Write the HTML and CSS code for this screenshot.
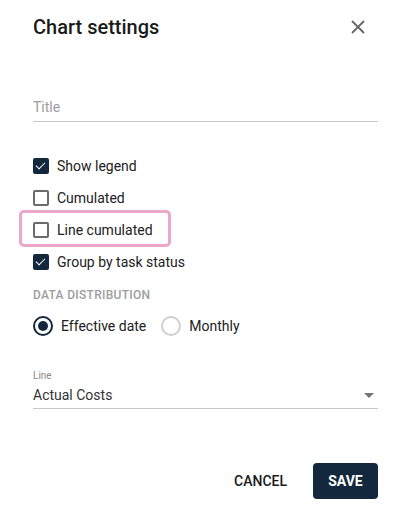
FILE: index.html
```html
<!DOCTYPE html>
<html lang="en">
<head>
    <meta charset="UTF-8">
    <meta name="viewport" content="width=device-width, initial-scale=1.0">
    <title>Chart settings</title>
    <link rel="stylesheet" href="styles.css">
</head>
<body>

<div class="dialog">
    <div class="dialog-header">
        <h2>Chart settings</h2>
        <button class="close-btn" aria-label="Close">
            <svg width="14" height="14" viewBox="0 0 14 14">
                <path d="M1 1 L13 13 M13 1 L1 13" stroke="#666" stroke-width="1.8" fill="none"/>
            </svg>
        </button>
    </div>

    <div class="field title-field">
        <span class="placeholder">Title</span>
    </div>

    <div class="checks">
        <label class="check-row"><span class="box checked"></span>Show legend</label>
        <label class="check-row"><span class="box"></span>Cumulated</label>
        <label class="check-row highlighted"><span class="box"></span>Line cumulated</label>
        <label class="check-row"><span class="box checked"></span>Group by task status</label>
    </div>

    <div class="section-label">Data distribution</div>

    <div class="radios">
        <label class="radio-row"><span class="radio selected"></span>Effective date</label>
        <label class="radio-row"><span class="radio"></span>Monthly</label>
    </div>

    <div class="select-field">
        <div class="select-label">Line</div>
        <div class="select-value">
            <span>Actual Costs</span>
            <span class="arrow"></span>
        </div>
    </div>

    <div class="dialog-actions">
        <button class="btn btn-text">Cancel</button>
        <button class="btn btn-primary">Save</button>
    </div>
</div>

</body>
</html>
```

FILE: styles.css
```css
body {
    font-family: Roboto, 'Liberation Sans', sans-serif;
    background-color: #fff;
    color: #212121;
    margin: 0;
    padding: 0;
}

.dialog {
    padding: 14px 18px 0 33px;
}

.dialog-header {
    display: flex;
    justify-content: space-between;
    align-items: center;
    height: 26px;
}

.dialog-header h2 {
    margin: 0;
    font-size: 20px;
    font-weight: 500;
    line-height: 26px;
    color: #1a1a1a;
}

.close-btn {
    background: none;
    border: none;
    padding: 0;
    margin-right: 13px;
    width: 14px;
    height: 14px;
    display: flex;
    cursor: pointer;
}

.field {
    margin-top: 57px;
    padding-bottom: 4px;
    border-bottom: 1px solid #c8c8c8;
}

.placeholder {
    display: block;
    font-size: 14px;
    line-height: 20px;
    color: #9e9e9e;
}

.checks {
    margin-top: 28px;
}

.check-row {
    display: flex;
    align-items: center;
    height: 32px;
    font-size: 14px;
    color: #212121;
    white-space: nowrap;
}

.highlighted {
    position: relative;
    width: fit-content;
}

.highlighted::after {
    content: '';
    position: absolute;
    top: -4px;
    bottom: -1px;
    left: -14px;
    right: -18px;
    border: 3px solid #eba6ca;
    border-radius: 5px;
}

.box {
    box-sizing: border-box;
    width: 16px;
    height: 16px;
    border: 2px solid #6b6b6b;
    border-radius: 2px;
    margin-right: 8px;
    flex-shrink: 0;
}

.box.checked {
    background-color: #13283d;
    border-color: #13283d;
    position: relative;
}

.box.checked::after {
    content: '';
    position: absolute;
    left: 3px;
    top: 0px;
    width: 4px;
    height: 8px;
    border: solid #fff;
    border-width: 0 1.5px 1.5px 0;
    transform: rotate(45deg);
}

.section-label {
    margin-top: 9px;
    font-size: 12px;
    font-weight: 500;
    line-height: 16px;
    color: #9e9e9e;
    text-transform: uppercase;
    letter-spacing: 0.3px;
}

.radios {
    display: flex;
    gap: 15px;
    margin-top: 7px;
}

.radio-row {
    display: flex;
    align-items: center;
    height: 32px;
    font-size: 14px;
    color: #212121;
}

.radio {
    box-sizing: border-box;
    width: 20px;
    height: 20px;
    border: 2px solid #cfcfcf;
    border-radius: 50%;
    margin-right: 8px;
    display: flex;
    align-items: center;
    justify-content: center;
}

.radio.selected {
    border-color: #13283d;
}

.radio.selected::after {
    content: '';
    width: 10px;
    height: 10px;
    border-radius: 50%;
    background-color: #13283d;
}

.select-field {
    margin-top: 27px;
    border-bottom: 1px solid #c8c8c8;
    padding-bottom: 3px;
}

.select-label {
    font-size: 10px;
    line-height: 14px;
    color: #8a8a8a;
}

.select-value {
    display: flex;
    justify-content: space-between;
    align-items: center;
    margin-top: 2px;
    font-size: 14px;
    line-height: 20px;
    color: #333;
}

.arrow {
    width: 0;
    height: 0;
    border-left: 5px solid transparent;
    border-right: 5px solid transparent;
    border-top: 5px solid #757575;
    margin-right: 4px;
}

.dialog-actions {
    display: flex;
    justify-content: flex-end;
    align-items: center;
    gap: 18px;
    margin-top: 54px;
}

.btn {
    font-family: Roboto, 'Liberation Sans', sans-serif;
    font-size: 14px;
    font-weight: 500;
    text-transform: uppercase;
    border: none;
    border-radius: 4px;
    height: 36px;
    padding: 0 8px;
    cursor: pointer;
}

.btn-text {
    background: none;
    color: #1a1a1a;
}

.btn-primary {
    background-color: #13283d;
    color: #fff;
    font-weight: 700;
    width: 65px;
}
```
